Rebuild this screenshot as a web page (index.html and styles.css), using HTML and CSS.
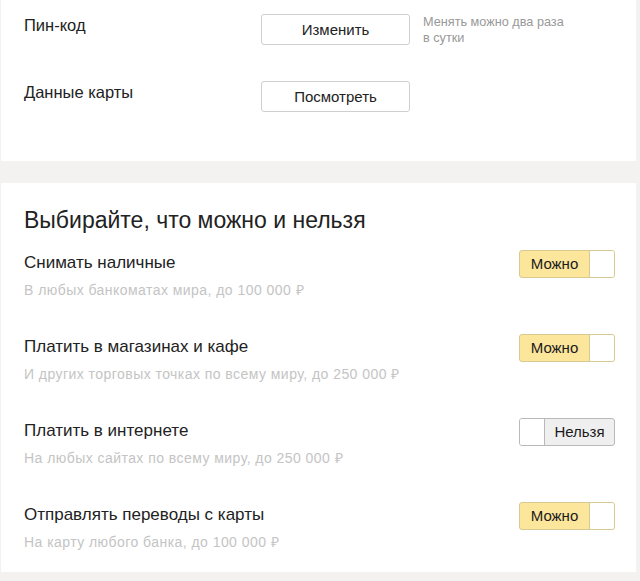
FILE: index.html
```html
<!DOCTYPE html>
<html lang="ru">
<head>
    <meta charset="UTF-8">
    <title>Настройки карты</title>
    <link rel="stylesheet" href="styles.css">
</head>
<body>
    <div class="card card-top">
        <div class="setting">
            <div class="setting-label">Пин-код</div>
            <button class="btn">Изменить</button>
            <div class="setting-hint">Менять можно два раза<br>в сутки</div>
        </div>
        <div class="setting">
            <div class="setting-label">Данные карты</div>
            <button class="btn">Посмотреть</button>
        </div>
    </div>

    <div class="card card-limits">
        <h2>Выбирайте, что можно и нельзя</h2>

        <div class="limit">
            <div class="limit-text">
                <div class="limit-title">Снимать наличные</div>
                <div class="limit-desc">В любых банкоматах мира, до 100 000 ₽</div>
            </div>
            <div class="toggle on"><span class="toggle-label">Можно</span><span class="knob"></span></div>
        </div>

        <div class="limit">
            <div class="limit-text">
                <div class="limit-title">Платить в магазинах и кафе</div>
                <div class="limit-desc">И других торговых точках по всему миру, до 250 000 ₽</div>
            </div>
            <div class="toggle on"><span class="toggle-label">Можно</span><span class="knob"></span></div>
        </div>

        <div class="limit">
            <div class="limit-text">
                <div class="limit-title">Платить в интернете</div>
                <div class="limit-desc">На любых сайтах по всему миру, до 250 000 ₽</div>
            </div>
            <div class="toggle off"><span class="knob"></span><span class="toggle-label">Нельзя</span></div>
        </div>

        <div class="limit">
            <div class="limit-text">
                <div class="limit-title">Отправлять переводы с карты</div>
                <div class="limit-desc">На карту любого банка, до 100 000 ₽</div>
            </div>
            <div class="toggle on"><span class="toggle-label">Можно</span><span class="knob"></span></div>
        </div>
    </div>
</body>
</html>
```

FILE: styles.css
```css
body {
    font-family: "Liberation Sans", Arial, sans-serif;
    background-color: #f3f2f0;
    color: #222;
    margin: 0;
    padding: 0 4px 0 1px;
}
.card {
    background-color: #fff;
}
.card-top {
    height: 161px;
    padding: 14px 0 0 23px;
    box-sizing: border-box;
    margin-bottom: 22px;
}
.setting {
    display: flex;
    align-items: flex-start;
    height: 67px;
}
.setting-label {
    width: 237px;
    font-size: 16.5px;
    line-height: 22px;
}
.btn {
    width: 149px;
    height: 31px;
    background: #fff;
    border: 1px solid #cfcfcf;
    border-radius: 3px;
    font-family: inherit;
    font-size: 15px;
    color: #222;
    padding: 0;
    margin: 0;
}
.setting-hint {
    margin-left: 13px;
    font-size: 12.7px;
    line-height: 16px;
    color: #999;
}
.card-limits {
    height: 389px;
    padding: 0 0 0 23px;
    box-sizing: border-box;
}
h2 {
    margin: 0;
    padding-top: 23px;
    font-size: 23px;
    font-weight: normal;
    line-height: 28px;
    height: 44px;
}
.limit {
    display: flex;
    justify-content: space-between;
    align-items: flex-start;
    height: 84px;
    padding-right: 21px;
}
.limit-text {
    padding-top: 1px;
}
.limit-title {
    font-size: 17px;
    line-height: 24px;
}
.limit-desc {
    margin-top: 5px;
    font-size: 14px;
    letter-spacing: 0.45px;
    line-height: 20px;
    color: #c4c4c4;
}
.toggle {
    display: flex;
    width: 96px;
    height: 28px;
    box-sizing: border-box;
    border-radius: 3px;
    overflow: hidden;
    font-size: 15px;
}
.toggle.on {
    background-color: #fbe69c;
    border: 1px solid #d7c98f;
}
.toggle.off {
    background-color: #efefef;
    border: 1px solid #b9b9b9;
}
.toggle-label {
    flex: 1;
    text-align: center;
    line-height: 26px;
    color: #1a1a1a;
}
.knob {
    width: 24px;
    background-color: #fff;
}
.toggle.on .knob {
    border-left: 1px solid #d7c98f;
}
.toggle.off .knob {
    border-right: 1px solid #b9b9b9;
}
```
